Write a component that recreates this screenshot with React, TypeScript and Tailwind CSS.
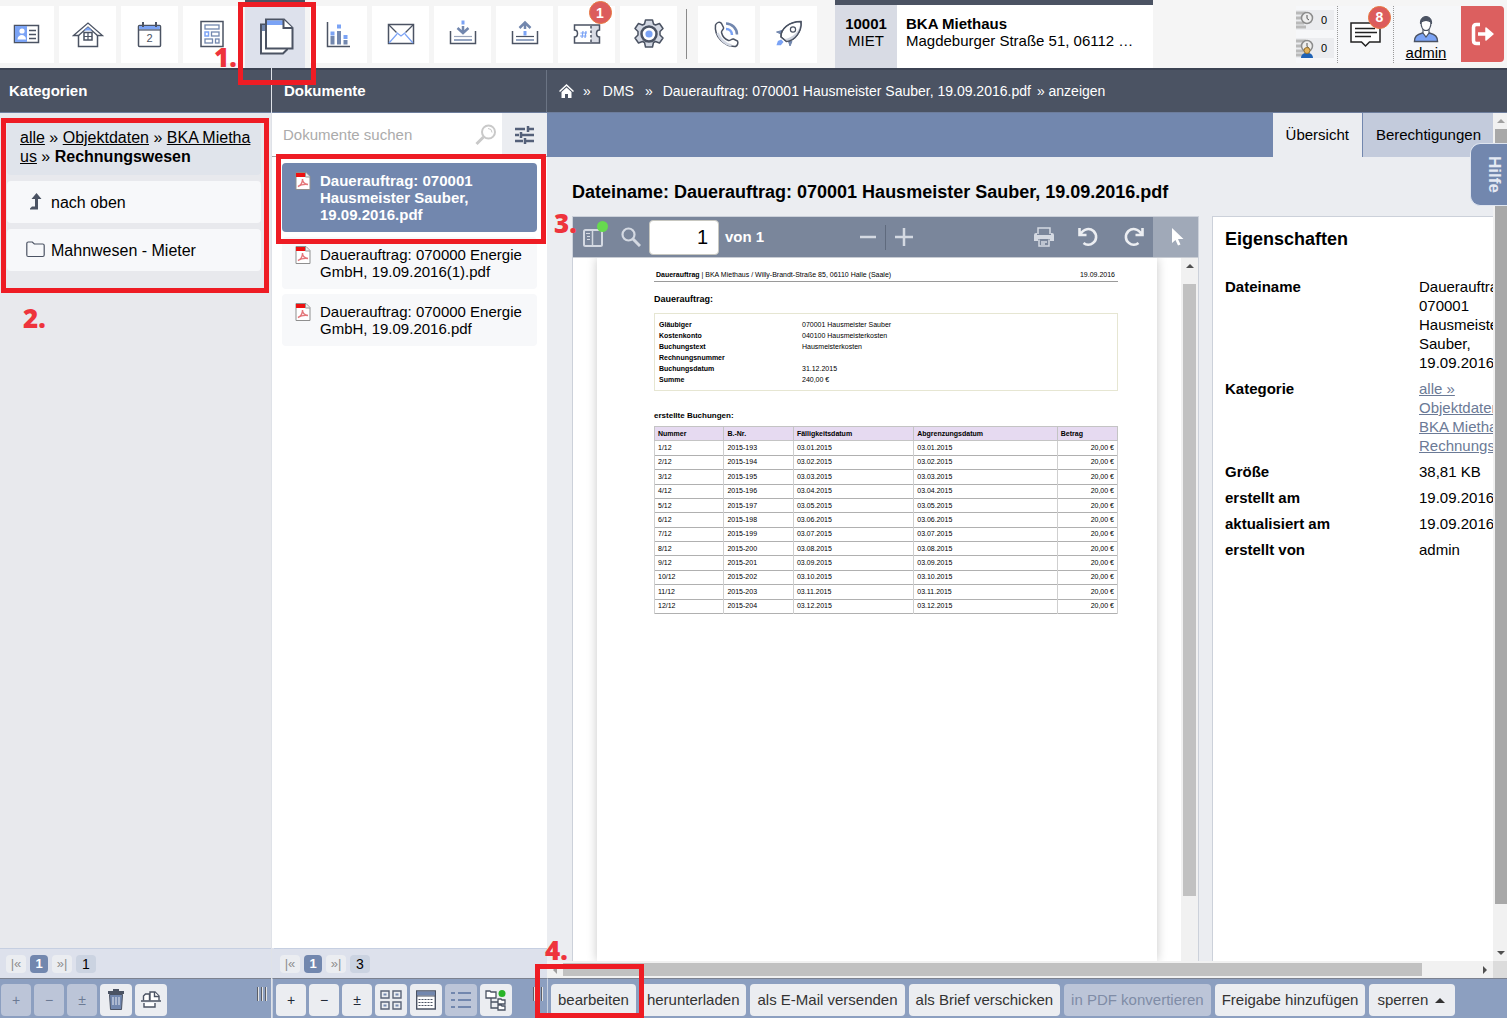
import type { ReactNode } from "react";

const DARK = "#4b5363";
const BLUE = "#7287ae";
const SKY = "#7ba3f5";

function Icon({ size = 36, children }: { size?: number; children: ReactNode }) {
  return (
    <svg width={size} height={size} viewBox={`0 0 ${size} ${size}`} fill="none" stroke={DARK} strokeWidth="1.5" aria-hidden="true">
      {children}
    </svg>
  );
}

const IdCard = () => (
  <Icon>
    <rect x="6.5" y="9.5" width="24" height="17" fill="#fff" />
    <rect x="7" y="10" width="12" height="16" fill={SKY} stroke="none" />
    <circle cx="14" cy="15" r="2.6" fill="#fff" stroke="none" />
    <path d="M9.5 23.5c0-6 8.500-6 8.500 0z" fill="#fff" stroke="none" />
    <path d="M21 14.500h7M21 18.500h7M21 22.500h7" />
  </Icon>
);
const House = () => (
  <Icon>
    <path d="M8.500 19v11.500h19V19" />
    <path d="M3.500 19.500 18 7l14.500 12.500h-5L18 11l-9.500 8.500z" fill="#fff" strokeWidth="1.300" />
    <path d="m14 14.500 4-3.500 4 3.500z" fill={SKY} stroke="none" />
    <rect x="14" y="16.500" width="8" height="7.500" />
    <path d="M18 16.500V24M14 20.500h8" strokeWidth="1.200" />
  </Icon>
);
const Calendar = () => (
  <Icon>
    <rect x="6.500" y="9.500" width="22" height="21" rx="1" fill="#fff" />
    <rect x="7.200" y="10" width="20.600" height="3.500" fill={SKY} stroke="none" />
    <path d="M6.500 14h22" strokeWidth="1.200" />
    <path d="M11 6v5M24 6v5" strokeWidth="2" />
    <text x="17.500" y="26" textAnchor="middle" fontSize="11" fontFamily="'Liberation Sans', sans-serif" fill={DARK} stroke="none">2</text>
  </Icon>
);
const FormIcon = () => (
  <Icon>
    <rect x="7" y="5.500" width="22" height="25" fill="#fff" />
    <g stroke={BLUE} strokeWidth="1.300">
      <rect x="11" y="9" width="14" height="4" />
      <rect x="17.500" y="16" width="7.500" height="4" />
      <rect x="11" y="23" width="7.500" height="4" />
      <rect x="21.500" y="23" width="3.500" height="4" />
    </g>
    <rect x="11" y="16" width="3.500" height="4" stroke={SKY} />
  </Icon>
);
const Documents = () => (
  <Icon size={40}>
    <path d="M6 9.500h26v25l-4 4H6z" fill="#fff" strokeWidth="2" />
    <rect x="7" y="10" width="4" height="6" fill={BLUE} stroke="none" />
    <path d="M11 4.500h18l8.500 8.500v20.500H11z" fill="#fff" strokeWidth="2" />
    <rect x="12" y="5.500" width="16" height="4.500" fill={SKY} stroke="none" />
    <path d="M28.500 4.500V13h9" fill="#fff" strokeWidth="2" />
  </Icon>
);
const Chart = () => (
  <Icon>
    <path d="M6.500 6v24.500H29" />
    <g strokeWidth="4" stroke={BLUE}>
      <path d="M11.500 28.500V20M18 28.500V15M24.500 28.500V24" />
      <path d="M11.500 19.500v-4M18 12.500v-4M24.500 23v-4" stroke={SKY} />
    </g>
  </Icon>
);
const Envelope = () => (
  <Icon>
    <rect x="5.500" y="8.500" width="25" height="19" fill="#fff" />
    <path d="m6 9 7.500 7.500M30 9l-7.500 7.500" strokeWidth="1.300" />
    <path d="m13.500 16.500 4.500 3.500 4.500-3.500M6 27l8-9M30 27l-8-9" stroke={SKY} strokeWidth="1.200" />
  </Icon>
);
const Tray = ({ up }: { up?: boolean }) => (
  <Icon>
    <path d="M5.500 15v12.500h25V15" />
    <path d="M9 20.500h18" stroke={up ? DARK : "#9aa5bb"} strokeWidth="1.200" />
    <path d="M9 24h18" stroke={BLUE} />
    {up ? (
      <g>
        <path d="m12.500 12 5.500-5.500 5.500 5.500M18 7v6" stroke={BLUE} strokeWidth="2.500" />
        <path d="M18 15v4.500" stroke={SKY} strokeWidth="3" />
      </g>
    ) : (
      <g>
        <path d="M18 4.500v4" stroke={SKY} strokeWidth="3" />
        <path d="m12.500 12 5.500 5 5.500-5M18 10v6" stroke={BLUE} strokeWidth="2.500" />
      </g>
    )}
  </Icon>
);
const Ticket = () => (
  <Icon>
    <path d="M22 9h8.500v5.500c-3 0-3 6 0 6v6.500H22z" fill="#d8dbe4" stroke="none" />
    <path d="M5.500 9h25v5c-4 0-4 7 0 7v6h-25v-6c4 0 4-7 0-7z" />
    <path d="M22 10v17" strokeDasharray="2.500 2" />
    <path d="m14 15-1 7M17 15l-1 7M11.500 17h6.500M11 20h6.500" stroke={SKY} strokeWidth="1.200" />
  </Icon>
);
const Gear = () => (
  <Icon>
    <path
      d="M14.500 4h7l1 4 2 1 4-1.500 3.500 5-3 3v3.500l3 3-3.500 5-4-1.500-2 1-1 4.500h-7l-1-4.500-2-1-4 1.500-3.500-5 3-3v-3.500l-3-3 3.500-5 4 1.500 2-1z"
      fill="#d3d8e3"
      strokeLinejoin="round"
    />
    <circle cx="18" cy="18" r="7.500" fill="#fff" strokeWidth="2.500" />
    <circle cx="18" cy="18" r="3.600" fill={SKY} stroke="none" />
  </Icon>
);
const Phone = () => (
  <Icon>
    <path
      d="M6.500 9c1-2.500 4.500-4 6-1.500l2 4c.8 2-2.500 3-2 5 1 4 4 7 7 8 2 .5 3-2 5-1.500l4 2c1 2 0 4.500-2 5.500C15 31 5 20 6.500 9z"
      fill="#fff"
    />
    <path d="M8.500 17c3 7 7 11 14 12.500" stroke="#d3d8e3" strokeWidth="2.500" />
    <path d="M17 7.500c6 0 11 5 11 11" stroke={BLUE} strokeWidth="2.500" />
    <path d="M17 13c3.500 0 6 2.500 6 6" stroke={SKY} strokeWidth="2.500" />
  </Icon>
);
const Rocket = () => (
  <Icon>
    <path d="M11 14.500 5.500 16l4.500 2zM21 25.500l-2 4.500-1.500-4.500z" fill={BLUE} stroke={BLUE} strokeWidth="1" />
    <path d="M10 21c-.5-8 8-15.500 20-15.500C31 15 24 25 15.500 25.500z" fill="#fff" />
    <path d="M29.500 7C28 16 22 22 13 23l2.500 2.500C24 25 31 15 29.500 7z" fill="#cfd4df" stroke="none" />
    <path d="M10 21c-.5-8 8-15.500 20-15.500C31 15 24 25 15.500 25.500z" strokeWidth="1.200" />
    <circle cx="22" cy="13.500" r="2.600" fill="#fff" strokeWidth="1.200" />
    <path d="m6.500 28.500 1-3 2.500-1 1.500 1.500-2 2.500z" fill={SKY} stroke={SKY} />
  </Icon>
);

function PdfIcon() {
  return (
    <svg width="16" height="18" viewBox="0 0 16 18" className="shrink-0" aria-hidden="true">
      <path d="M1 .5h10l4 4v13H1z" fill="#fff" stroke="#8f8f8f" />
      <path d="M1 1h9v4H1z" fill="#ee1111" />
      <path d="M10.500 1v4H15" fill="#eee" stroke="#999" />
      <path d="M3 14.500c2.500-1 4.500-4 4.500-7.500 0 3.500 2 5 5.500 5.500-4-.5-7 0-10 2z" fill="none" stroke="#e4777b" strokeWidth="1.400" />
    </svg>
  );
}

function Badge({ children }: { children: ReactNode }) {
  return (
    <span className="absolute top-0 right-0 flex size-[23px] items-center justify-center rounded-full border border-[#e8773f] bg-[#dc5c5c] text-sm font-bold text-white">
      {children}
    </span>
  );
}

const tools: { name: string; icon: ReactNode; active?: boolean; badge?: string }[] = [
  { name: "Kontakte", icon: <IdCard /> },
  { name: "Objekte", icon: <House /> },
  { name: "Kalender", icon: <Calendar /> },
  { name: "Formulare", icon: <FormIcon /> },
  { name: "DMS", icon: <Documents />, active: true },
  { name: "Auswertungen", icon: <Chart /> },
  { name: "Nachrichten", icon: <Envelope /> },
  { name: "Import", icon: <Tray /> },
  { name: "Export", icon: <Tray up /> },
  { name: "Tickets", icon: <Ticket />, badge: "1" },
  { name: "Einstellungen", icon: <Gear /> },
];

function Tile({ name, icon, active, badge }: { name: string; icon: ReactNode; active?: boolean; badge?: string }) {
  return (
    <button
      aria-label={name}
      className={
        active
          ? "flex h-[68px] w-[60px] shrink-0 items-center justify-center border-t-2 border-[#4b5363] bg-[#dde1ec]"
          : "flex h-[57px] w-[57px] shrink-0 items-center justify-center bg-white"
      }
    >
      {icon}
      {badge && (
        <span className="relative size-0">
          <span className="absolute -top-[33px] -left-[16px] h-[23px] w-[23px]">
            <Badge>{badge}</Badge>
          </span>
        </span>
      )}
    </button>
  );
}

function Counter({ user }: { user?: boolean }) {
  return (
    <div className="flex h-5 w-[38px] items-center bg-[#ebecef]">
      <svg width="18" height="20" viewBox="0 0 18 20" aria-hidden="true">
        <path d="M0 3h10M0 8h8M0 13h8M0 17h10" stroke="#b9b9b9" strokeWidth="3" />
        <circle cx="11" cy="8" r="5.500" fill="#eee" stroke="#8c8c8c" strokeWidth="1.500" />
        <path d="M11 5v3.500l2 1.500" fill="none" stroke="#555" />
        {user && (
          <g>
            <path d="M5 20c0-7 12-7 12 0z" fill="#1f62b5" />
            <circle cx="11" cy="12.500" r="3" fill="#e3b35c" stroke="#94702d" />
          </g>
        )}
      </svg>
      <span className="flex-1 text-center text-[11px]">0</span>
    </div>
  );
}

function TopBar() {
  return (
    <header className="flex h-[68px] shrink-0 items-center bg-[#f5f5f5]">
      <nav aria-label="Module" className="-ml-[3px] flex items-center gap-[5px]">
        {tools.map((t) => (
          <Tile key={t.name} {...t} />
        ))}
        <div className="mr-[6px] ml-1 h-[50px] w-px bg-[#8a8a8a]" />
        <Tile name="Telefon" icon={<Phone />} />
        <Tile name="Start" icon={<Rocket />} />
      </nav>
      <div className="ml-[18px] flex h-full w-[318px] shrink-0 border-t-[5px] border-[#4b5363] bg-white text-[15px] leading-[17px]">
        <div className="w-[62px] bg-[#d8dbe4] pt-[10px] text-center">
          <b>10001</b>
          <div>MIET</div>
        </div>
        <div className="pt-[10px] pl-[9px]">
          <b>BKA Miethaus</b>
          <div>Magdeburger Straße 51, 06112 …</div>
        </div>
      </div>
      <div className="mr-[3px] ml-auto flex h-[57px] items-center bg-[#f6f7f9]">
        <div className="flex w-[41px] flex-col gap-2">
          <Counter />
          <Counter user />
        </div>
        <button aria-label="Mitteilungen" className="relative flex h-full w-[56px] items-center justify-center border-l border-dotted border-[#999]">
          <svg width="32" height="28" viewBox="0 0 32 28" fill="none" stroke="#222" strokeWidth="1.500" aria-hidden="true">
            <path d="M1 3h29v19H19.500l-4 4-4-4H1z" fill="#fff" />
            <path d="M5 8.500h20M5 12.500h22M5 16.500h16" />
          </svg>
          <span className="absolute top-0 right-[2px] size-[23px]">
            <Badge>8</Badge>
          </span>
        </button>
        <div className="flex h-full w-[68px] flex-col items-center border-l border-dotted border-[#999] pt-[9px] pr-[3px]">
          <svg width="26" height="28" viewBox="0 0 26 28" stroke={DARK} strokeWidth="1.500" aria-hidden="true">
            <path d="M1.500 26.500c0-5 2-7 8-8.500h7c6 1.500 8 3.500 8 8.500z" fill={SKY} />
            <path d="M10 14v4l3 4 3-4v-4z" fill="#fff" strokeWidth="1.200" />
            <path d="M8 7c0 5 2 8.500 5 8.500s5-3.500 5-8.500c-3-2-7-2-10 0z" fill="#fff" strokeWidth="1.200" />
            <path d="M7.500 9C6-1 20-1 18.500 9c-1-3.500-3-4-5.500-4s-4.500.5-5.500 4z" fill={DARK} strokeWidth="1" />
          </svg>
          <a href="#admin" className="text-[15px] leading-5 underline">admin</a>
        </div>
        <button aria-label="Abmelden" className="flex h-[56px] w-[43px] items-center justify-center rounded-r bg-[#dc5f5f]">
          <svg width="24" height="24" viewBox="0 0 24 24" fill="none" stroke="#fff" strokeWidth="3.500" strokeLinejoin="round" aria-hidden="true">
            <path d="M9 2.500H5.500q-3 0-3 3v13q0 3 3 3H9M7 12h12" />
            <path d="m15 6 7 6-7 6z" fill="#fff" strokeWidth="1.500" />
          </svg>
        </button>
      </div>
    </header>
  );
}

function Bar({ children }: { children: ReactNode }) {
  return (
    <div className="flex h-[45px] shrink-0 items-center border-t-2 border-b border-t-[#3c4353] border-b-[#6d7d9c] bg-[#4b5363] text-white">
      {children}
    </div>
  );
}

function Pager({ total }: { total: string }) {
  return (
    <div className="flex h-[30px] shrink-0 items-center gap-1 border-t border-[#c6cfe1] bg-[#dde1ec] px-[6px] text-[13px] leading-[18px]">
      <button className="w-[20px] rounded bg-[#ebedf1] text-[#8d8d8d]">|«</button>
      <button className="w-[18px] rounded bg-[#7287ae] font-bold text-white">1</button>
      <button className="w-[20px] rounded bg-[#ebedf1] text-[#8d8d8d]">»|</button>
      <span className="w-[20px] rounded bg-[#cbd3e1] text-center text-sm leading-[18px]">{total}</span>
    </div>
  );
}

function Tool({ label, muted, wide, children }: { label: string; muted?: boolean; wide?: boolean; children: ReactNode }) {
  return (
    <button
      aria-label={label}
      disabled={muted}
      className={`flex h-8 shrink-0 items-center justify-center rounded-sm text-sm ${wide ? "w-8" : "w-[30px]"} ${
        muted ? "bg-[#bcc5d8] text-[#6c7a94]" : "bg-[#ebedf1] text-[#222a38]"
      }`}
    >
      {children}
    </button>
  );
}

function Grip() {
  return (
    <span className="mb-3 ml-auto flex gap-[2px] pr-1">
      {[0, 1, 2].map((n) => (
        <i key={n} className="h-[14px] w-[2px] border-r border-[#e4e4e4] bg-[#5b5f68]" />
      ))}
    </span>
  );
}

const toolRow = "flex h-[40px] shrink-0 items-center border-t border-[#7c8290] bg-[#8c9fc0] pt-[3px]";

function Categories() {
  return (
    <aside className="flex w-[272px] shrink-0 flex-col border-r border-[#dfe2e8] bg-[#e8e9ed]">
      <Bar>
        <h2 className="pl-[9px] text-[15px] font-bold">Kategorien</h2>
      </Bar>
      <div className="flex min-h-0 flex-1 flex-col gap-[6px] pt-[6px] pr-[10px] pl-[7px] text-base leading-[19px]">
        <div className="h-[56px] rounded bg-[#e0e4eb] pt-[9px] pr-[5px] pl-[13px] break-all">
          <a href="#alle" className="underline">alle</a> » <a href="#objektdaten" className="underline">Objektdaten</a> »{" "}
          <a href="#bka" className="underline">BKA Miethaus</a> » <b>Rechnungswesen</b>
        </div>
        <button className="flex h-[42px] items-center rounded bg-[#f7f8fa] pl-[19px] text-left">
          <svg width="25" height="20" viewBox="0 0 25 20" fill={DARK} aria-hidden="true">
            <path d="M4 17.500v-1l2-2h3V7H5.500L10.500 1l5 6H12v10.500z" />
          </svg>
          nach oben
        </button>
        <button className="flex h-[42px] items-center rounded bg-[#f7f8fa] pl-[19px] text-left">
          <svg width="25" height="20" viewBox="0 0 25 20" fill="none" stroke={DARK} strokeWidth="1.200" aria-hidden="true">
            <path d="M.8 3.500q0-1.500 1.500-1.500h4l2 2h8.400q1.500 0 1.500 1.500v9.500q0 1.500-1.500 1.500H2.300Q.8 16.500.8 15z" />
          </svg>
          Mahnwesen - Mieter
        </button>
      </div>
      <Pager total="1" />
      <div className={`${toolRow} gap-[3px] pl-px`}>
        <Tool label="Hinzufügen" muted>+</Tool>
        <Tool label="Entfernen" muted>−</Tool>
        <Tool label="Umkehren" muted>±</Tool>
        <Tool label="Löschen" wide>
          <svg width="18" height="22" viewBox="0 0 18 22" stroke={DARK} aria-hidden="true">
            <path d="M2.500 5.500h13l-1 15h-11z" fill={BLUE} />
            <path d="M6 8v8M9 8v8M12 8v8" stroke="#e8ebf2" />
            <path d="M1 3.500h16M6 1.500h6" strokeWidth="3" />
          </svg>
        </Tool>
        <Tool label="Verschieben" wide>
          <svg width="20" height="20" viewBox="0 0 20 20" fill="#fff" stroke={DARK} strokeWidth="1.400" aria-hidden="true">
            <path d="M2.500 10.500V6l2-2h4v6.500M9 10.500V2h5l4 4v4.500" />
            <path d="M13.500 2v4.500H18" />
            <path d="M0 11h20M3 13v4h11v-4" />
          </svg>
        </Tool>
        <Grip />
      </div>
    </aside>
  );
}

const documents = [
  { name: "Dauerauftrag: 070001 Hausmeister Sauber, 19.09.2016.pdf", selected: true },
  { name: "Dauerauftrag: 070000 Energie GmbH, 19.09.2016(1).pdf" },
  { name: "Dauerauftrag: 070000 Energie GmbH, 19.09.2016.pdf" },
];

function DocumentList() {
  return (
    <section className="flex w-[275px] shrink-0 flex-col bg-white">
      <Bar>
        <div className="flex h-full flex-1 items-center border-r border-[#6b7484] pl-[12px]">
          <h2 className="text-[15px] font-bold">Dokumente</h2>
        </div>
      </Bar>
      <div className="flex h-[44px] shrink-0 items-center border-b border-[#a5a5a5]">
        <input
          aria-label="Dokumente suchen"
          placeholder="Dokumente suchen"
          className="h-full min-w-0 flex-1 pl-[11px] text-[15px] outline-none placeholder:text-[#ababab]"
        />
        <svg width="22" height="22" viewBox="0 0 22 22" fill="none" stroke="#c9c9c9" className="mr-[5px]" aria-hidden="true">
          <circle cx="13.500" cy="8" r="6.500" strokeWidth="2" />
          <path d="m8.500 13-7 7" strokeWidth="3" />
          <path d="M13 4.500q4 0 4 4" />
        </svg>
        <button aria-label="Filter" className="flex h-full w-[45px] items-center justify-center bg-[#ebedf1]">
          <svg width="19" height="18" viewBox="0 0 19 18" stroke="#546079" aria-hidden="true">
            <path d="M0 3h10M12 3h7M0 9h4M7 9h12M0 15h8M11 15h8" strokeWidth="2.300" />
            <path d="M13 0v6M6 6v6M10 12v6" strokeWidth="2.500" />
          </svg>
        </button>
      </div>
      <ul className="flex min-h-0 flex-1 flex-col gap-[5px] px-[10px] pt-[6px]">
        {documents.map((d) => (
          <li key={d.name}>
            <button
              className={`flex w-full gap-[9px] rounded py-[9px] pr-[10px] pl-[13px] text-left text-[15px] leading-[17px] ${
                d.selected ? "bg-[#7287ae] font-bold text-white" : "bg-[#f7f8fa]"
              }`}
            >
              <PdfIcon />
              <span>{d.name}</span>
            </button>
          </li>
        ))}
      </ul>
      <div className="bg-[#dde1ec]">
        <div className="border-l-2 border-[#dde1ec]">
          <Pager total="3" />
        </div>
      </div>
      <div className={`${toolRow} gap-[3px] border-l border-l-[#c9d1e0] pl-[3px]`}>
        <Tool label="Hinzufügen">+</Tool>
        <Tool label="Entfernen">−</Tool>
        <Tool label="Umkehren">±</Tool>
        <Tool label="Kacheln" wide>
          <svg width="22" height="20" viewBox="0 0 22 20" fill="none" stroke="#5b6478" strokeWidth="1.400" aria-hidden="true">
            <path d="M1 1h8v7H1zM13 1h8v7h-8zM1 12h8v7H1zM13 12h8v7h-8z" />
            <path d="M3.500 4.500h3M15.500 4.500h3M3.500 15.500h3M15.500 15.500h3" stroke={BLUE} strokeWidth="2" />
          </svg>
        </Tool>
        <Tool label="Tabelle" wide>
          <svg width="20" height="20" viewBox="0 0 20 20" stroke={DARK} aria-hidden="true">
            <path d="M.7 1h18.600v18H.7z" fill="#fff" strokeWidth="1.400" />
            <path d="M1 3.500h18" stroke={BLUE} strokeWidth="4" />
            <path d="M1 6h18" />
            <path d="M2.500 9.500h15M2.500 12.500h15M2.500 15.500h15" strokeDasharray="2 1" strokeWidth="1.200" />
          </svg>
        </Tool>
        <Tool label="Liste" muted wide>
          <svg width="20" height="18" viewBox="0 0 20 18" stroke={BLUE} strokeWidth="2" aria-hidden="true">
            <path d="M0 2h4M7 2h13M0 9h4M7 9h13M0 16h4M7 16h13" />
          </svg>
        </Tool>
        <Tool label="Baum" wide>
          <svg width="22" height="22" viewBox="0 0 22 22" fill="#fff" stroke={DARK} strokeWidth="1.300" aria-hidden="true">
            <path d="M1 2h4l1 1h5v6H1zM13 10h3l1 1h3v4h-7zM13 16h3l1 1h3v4h-7z" />
            <path d="M6 9v10h7M6 13h7" fill="none" />
            <circle cx="17" cy="4.500" r="3.500" fill="#28b428" stroke="none" />
          </svg>
        </Tool>
        <Grip />
      </div>
    </section>
  );
}

const bookings = Array.from({ length: 12 }, (_, i) => ({
  no: `${i + 1}/12`,
  id: `2015-${193 + i}`,
  date: `03.${String(i + 1).padStart(2, "0")}.2015`,
}));

const orderFacts = [
  ["Gläubiger", "070001 Hausmeister Sauber"],
  ["Kostenkonto", "040100 Hausmeisterkosten"],
  ["Buchungstext", "Hausmeisterkosten"],
  ["Rechnungsnummer", ""],
  ["Buchungsdatum", "31.12.2015"],
  ["Summe", "240,00 €"],
];

function PdfPage() {
  return (
    <div className="mx-6 min-w-0 flex-1 bg-white pt-[12px] pr-[39px] pl-[57px] text-[7px] leading-[10px] shadow-[0_0_10px_rgba(0,0,0,0.22)]">
      <div className="flex justify-between border-b border-[#9a9a9a] pr-[3px] pb-px pl-[2px]">
        <span>
          <b>Dauerauftrag</b> | BKA Miethaus / Willy-Brandt-Straße 85, 06110 Halle (Saale)
        </span>
        <span>19.09.2016</span>
      </div>
      <h3 className="mt-[12px] text-[9px] font-bold">Dauerauftrag:</h3>
      <dl className="mt-[9px] grid grid-cols-[143px_1fr] border border-[#e6e6d2] px-[4px] py-[5px] leading-[11px]">
        {orderFacts.map(([k, v]) => (
          <div key={k} className="contents">
            <dt className="font-bold">{k}</dt>
            <dd>{v}</dd>
          </div>
        ))}
      </dl>
      <h3 className="mt-[20px] text-[8px] leading-[10px] font-bold">erstellte Buchungen:</h3>
      <table className="mt-[5px] h-[188px] w-full table-fixed border-collapse border border-[#c4c4c4] text-left">
        <colgroup>
          <col className="w-[15%]" />
          <col className="w-[15%]" />
          <col className="w-[26%]" />
          <col className="w-[31%]" />
          <col className="w-[13%]" />
        </colgroup>
        <tbody>
          <tr className="h-[14px] bg-[#e6daf1]">
            {["Nummer", "B.-Nr.", "Fälligkeitsdatum", "Abgrenzungsdatum", "Betrag"].map((h) => (
              <th key={h} scope="col" className="border border-[#c4c4c4] px-[3px] py-0">{h}</th>
            ))}
          </tr>
          {bookings.map((b) => (
            <tr key={b.no} className="h-[14px] border-b border-[#b0b0b0]">
              <td className="border-x border-[#cfcfcf] px-[3px] py-0">{b.no}</td>
              <td className="border-x border-[#cfcfcf] px-[3px] py-0">{b.id}</td>
              <td className="border-x border-[#cfcfcf] px-[3px] py-0">{b.date}</td>
              <td className="border-x border-[#cfcfcf] px-[3px] py-0">{b.date}</td>
              <td className="border-x border-[#cfcfcf] px-[3px] py-0 text-right">20,00 €</td>
            </tr>
          ))}
        </tbody>
      </table>
    </div>
  );
}

function Arrow({ dir, tone = "#505050" }: { dir: "up" | "down" | "left" | "right"; tone?: string }) {
  const d = { up: "M4 10 8 6l4 4z", down: "M4 6l4 4 4-4z", left: "M10 4 6 8l4 4z", right: "M6 4l4 4-4 4z" }[dir];
  return (
    <svg width="16" height="16" viewBox="0 0 16 16" fill={tone} className="shrink-0" aria-hidden="true">
      <path d={d} />
    </svg>
  );
}

function Viewer() {
  return (
    <div className="flex min-w-0 flex-1 flex-col border border-b-0 border-[#ccd1da] bg-white">
      <div className="flex h-[41px] shrink-0 items-center border-b border-[#c9cdd4] bg-[#7a869b] text-[#d4d9e2]">
        <button aria-label="Seitenleiste" className="relative ml-[10px]">
          <svg width="20" height="19" viewBox="0 0 20 19" fill="none" stroke="currentColor" strokeWidth="2" aria-hidden="true">
            <rect x="1" y="2" width="18" height="16" rx="1.500" />
            <path d="M9.500 2v16" strokeWidth="1.500" />
            <path d="M3 5.500h4M4 8.500h3M4 11.500h3" strokeWidth="1.200" />
          </svg>
          <span className="absolute -top-[7px] left-[14px] size-[11px] rounded-full bg-[#67d94f]" />
        </button>
        <button aria-label="Suchen" className="ml-[18px]">
          <svg width="20" height="20" viewBox="0 0 20 20" fill="none" stroke="currentColor" aria-hidden="true">
            <circle cx="7.500" cy="7.500" r="6" strokeWidth="2.200" />
            <path d="m12 12 7 7" strokeWidth="3" />
          </svg>
        </button>
        <input aria-label="Seite" defaultValue="1" className="ml-[8px] h-[35px] w-[70px] rounded-sm border border-[#c7c7c0] bg-white pr-[10px] text-right text-xl text-black outline-none" />
        <span className="ml-[6px] text-[15px] font-bold text-white">von 1</span>
        <div className="ml-auto flex items-center pr-[121px]">
          <button aria-label="Verkleinern">
            <svg width="16" height="18" viewBox="0 0 16 18" stroke="currentColor" strokeWidth="2.500" aria-hidden="true">
              <path d="M0 9h16" />
            </svg>
          </button>
          <span className="mx-[9px] h-[25px] w-px bg-[#5f6a7d]" />
          <button aria-label="Vergrößern">
            <svg width="18" height="18" viewBox="0 0 18 18" stroke="currentColor" strokeWidth="2.500" aria-hidden="true">
              <path d="M0 9h18M9 0v18" />
            </svg>
          </button>
        </div>
        <button aria-label="Drucken">
          <svg width="20" height="20" viewBox="0 0 20 20" fill="none" stroke="currentColor" strokeWidth="1.500" aria-hidden="true">
            <path d="M4 7V1h12v6" />
            <path d="M0 8q0-2 2-2h1v2h14V6h1q2 0 2 2v6h-4v-2H4v2H0z" fill="currentColor" stroke="none" />
            <path d="M5 12.500v6.500h10v-6.500M7 15h6M7 17h4" />
          </svg>
        </button>
        <button aria-label="Nach links drehen" className="ml-6">
          <svg width="20" height="20" viewBox="0 0 20 20" fill="none" stroke="#eceef2" strokeWidth="2.600" aria-hidden="true">
            <path d="M1.500 1v7h7M2 7.500C6 1 12 1 15.500 4c4 4 3 9.500-.5 12-3 2.500-7 2-9.500 0" />
          </svg>
        </button>
        <button aria-label="Nach rechts drehen" className="ml-[26px]">
          <svg width="20" height="20" viewBox="0 0 20 20" fill="none" stroke="#eceef2" strokeWidth="2.600" aria-hidden="true">
            <path d="M18.500 1v7h-7M18 7.500C14 1 8 1 4.500 4 .5 8 1.500 13.500 5 16c3 2.500 7 2 9.500 0" />
          </svg>
        </button>
        <button aria-label="Auswahl" className="ml-[9px] flex h-full w-[45px] items-center justify-center bg-[#a0a9b8]">
          <svg width="12" height="18" viewBox="0 0 12 18" fill="#fff" className="ml-1" aria-hidden="true">
            <path d="M0 0v15l3.500-3 2.500 5.500 2.500-1-2.500-5.500h5.500z" />
          </svg>
        </button>
      </div>
      <div className="flex min-h-0 flex-1 overflow-hidden">
        <PdfPage />
        <div className="flex w-[17px] flex-col items-center bg-[#f1f1f1]">
          <div className="flex h-[26px] shrink-0">
            <Arrow dir="up" />
          </div>
          <div className="h-[87%] w-[13px] bg-[#c1c1c1]" />
        </div>
      </div>
    </div>
  );
}

function Row({ label, children }: { label: string; children: ReactNode }) {
  return (
    <div className="contents">
      <dt className="font-bold">{label}</dt>
      <dd>{children}</dd>
    </div>
  );
}

function Properties() {
  return (
    <div className="w-[281px] shrink-0 overflow-hidden border-t border-l border-[#ccd1da] bg-white pt-[12px] pl-[12px]">
      <h2 className="text-lg leading-5 font-bold">Eigenschaften</h2>
      <dl className="mt-[28px] grid w-[340px] grid-cols-[194px_1fr] gap-y-[7px] text-[15px] leading-[19px]">
        <Row label="Dateiname">
          Dauerauftrag:<br />070001<br />Hausmeister<br />Sauber,<br />19.09.2016.pdf
        </Row>
        <Row label="Kategorie">
          <a href="#kategorie" className="text-[#6b7a96] underline">
            alle »<br />Objektdaten »<br />BKA Miethaus »<br />Rechnungswesen
          </a>
        </Row>
        <Row label="Größe">38,81 KB</Row>
        <Row label="erstellt am">19.09.2016</Row>
        <Row label="aktualisiert am">19.09.2016</Row>
        <Row label="erstellt von">admin</Row>
      </dl>
    </div>
  );
}

const actions = [
  { label: "bearbeiten" },
  { label: "herunterladen" },
  { label: "als E-Mail versenden" },
  { label: "als Brief verschicken" },
  { label: "in PDF konvertieren", muted: true },
  { label: "Freigabe hinzufügen" },
];

function Detail() {
  return (
    <main className="flex min-w-0 flex-1 flex-col bg-[#ebedf1]">
      <Bar>
        <nav aria-label="Pfad" className="flex items-center pb-px pl-[12px] text-sm whitespace-nowrap">
          <a href="#start" aria-label="Startseite">
            <svg width="15" height="14" viewBox="0 0 15 14" fill="#fff" aria-hidden="true">
              <path d="M7.500 0 15 7l-1 1-6.500-6L1 8 0 7z" />
              <path d="M2.500 8l5-4.500 5 4.500v6H9v-4H6v4H2.500z" />
            </svg>
          </a>
          <span className="ml-[9px]">»</span>
          <a href="#dms" className="ml-[12px]">DMS</a>
          <span className="ml-[11px]">»</span>
          <a href="#dokument" className="ml-[10px]">Dauerauftrag: 070001 Hausmeister Sauber, 19.09.2016.pdf</a>
          <span className="ml-[6px]">» anzeigen</span>
        </nav>
      </Bar>
      <div className="flex min-h-0 flex-1">
        <div className="flex min-w-0 flex-1 flex-col">
          <div role="tablist" className="flex h-[44px] shrink-0 justify-end bg-[#7287ae] text-[15px]">
            <button role="tab" aria-selected="true" className="bg-[#ebedf1] px-[13px]">Übersicht</button>
            <button role="tab" aria-selected="false" className="ml-px bg-[#c3cbdc] pr-[12px] pl-[13px]">Berechtigungen</button>
          </div>
          <h1 className="mt-[25px] mb-[14px] ml-[25px] text-lg leading-5 font-bold whitespace-nowrap">
            Dateiname: Dauerauftrag: 070001 Hausmeister Sauber, 19.09.2016.pdf
          </h1>
          <div className="flex min-h-0 flex-1 gap-[13px] pl-[25px]">
            <Viewer />
            <Properties />
          </div>
        </div>
        <div className="flex w-[14px] shrink-0 flex-col overflow-hidden bg-[#f1f1f1]">
          <Arrow dir="up" tone="#a0a0a0" />
          <div className="min-h-0 flex-1 pl-[2px]">
            <div className="h-[95%] bg-[#a8a8a8]" />
          </div>
          <Arrow dir="down" />
        </div>
      </div>
      <div className="flex h-[17px] shrink-0 items-center bg-[#f1f1f1]">
        <Arrow dir="left" tone="#a0a0a0" />
        <div className="h-[13px] flex-1">
          <div className="h-full w-[94%] bg-[#c1c1c1]" />
        </div>
        <Arrow dir="right" />
        <div className="h-full w-[14px] bg-[#dcdcdc]" />
      </div>
      <div className={`${toolRow} gap-[4px] border-l border-l-[#c9d1e0] pl-[3px] text-[15px] whitespace-nowrap`}>
        {actions.map((a) => (
          <button
            key={a.label}
            disabled={a.muted}
            className={`h-8 rounded-sm px-[7px] ${a.muted ? "bg-[#bcc5d8] text-[#7f8ca6]" : "bg-[#ebedf1] text-[#333]"}`}
          >
            {a.label}
          </button>
        ))}
        <button className="flex h-8 items-center gap-[7px] rounded-sm bg-[#ebedf1] pr-[10px] pl-[8px] text-[#333]">
          sperren
          <svg width="10" height="5" viewBox="0 0 10 5" fill="#333" aria-hidden="true">
            <path d="M0 5l5-5 5 5z" />
          </svg>
        </button>
      </div>
    </main>
  );
}

const frame = "pointer-events-none absolute border-[5px] border-[#ee1c24]";
const mark = "pointer-events-none absolute font-['Open_Sans',sans-serif] text-[26px] leading-[26px] font-extrabold text-[#ee343c]";

function Annotations() {
  return (
    <>
      <div className={`${frame} top-[2px] left-[238px] h-[83px] w-[78px]`} />
      <div className={`${frame} top-[118px] left-px h-[175px] w-[268px]`} />
      <div className={`${frame} top-[154px] left-[276px] h-[90px] w-[270px]`} />
      <div className={`${frame} bottom-0 left-[535px] h-[54px] w-[109px]`} />
      <span className={`${mark} top-[44px] left-[214px]`}>1.</span>
      <span className={`${mark} top-[305px] left-[23px]`}>2.</span>
      <span className={`${mark} top-[210px] left-[554px]`}>3.</span>
      <span className={`${mark} bottom-[55px] left-[545px]`}>4.</span>
    </>
  );
}

export default function App() {
  return (
    <div className="relative flex h-screen flex-col overflow-hidden font-['Liberation_Sans',Arial,sans-serif] text-black">
      <TopBar />
      <div className="flex min-h-0 flex-1">
        <Categories />
        <DocumentList />
        <Detail />
      </div>
      <button className="absolute top-[143px] right-0 flex h-[63px] w-[37px] items-center justify-center rounded-l-[10px] border border-r-0 border-[#dfe5f0] bg-[#7287ae] pl-[10px] text-[17px] font-bold text-[#e4e9f3] [writing-mode:vertical-rl]">
        Hilfe
      </button>
      <Annotations />
    </div>
  );
}
